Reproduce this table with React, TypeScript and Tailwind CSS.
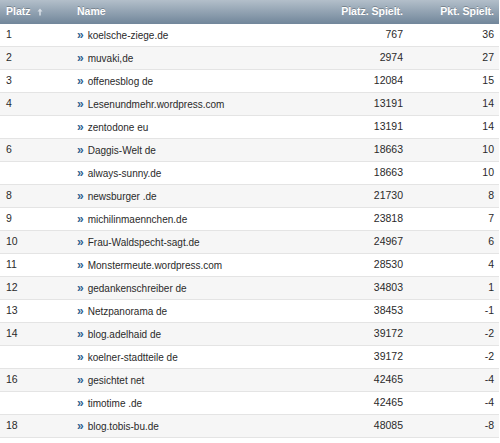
import React from "react";

const rows: [string, string, string, string][] = [
  ["1", "koelsche-ziege.de", "767", "36"],
  ["2", "muvaki,de", "2974", "27"],
  ["3", "offenesblog de", "12084", "15"],
  ["4", "Lesenundmehr.wordpress.com", "13191", "14"],
  ["", "zentodone eu", "13191", "14"],
  ["6", "Daggis-Welt de", "18663", "10"],
  ["", "always-sunny.de", "18663", "10"],
  ["8", "newsburger .de", "21730", "8"],
  ["9", "michilinmaennchen.de", "23818", "7"],
  ["10", "Frau-Waldspecht-sagt.de", "24967", "6"],
  ["11", "Monstermeute.wordpress.com", "28530", "4"],
  ["12", "gedankenschreiber de", "34803", "1"],
  ["13", "Netzpanorama de", "38453", "-1"],
  ["14", "blog.adelhaid de", "39172", "-2"],
  ["", "koelner-stadtteile de", "39172", "-2"],
  ["16", "gesichtet net", "42465", "-4"],
  ["", "timotime .de", "42465", "-4"],
  ["18", "blog.tobis-bu.de", "48085", "-8"],
];

export default function App() {
  return (
    <div
      className="w-[500px] h-[443px] bg-white text-[#2a2a2a]"
      style={{ fontFamily: '"Liberation Sans", Arial, sans-serif' }}
    >
      <div className="w-[499px]">
        <div className="grid grid-cols-[74px_1fr_90px_89px] h-[24px] items-center bg-gradient-to-b from-[#b3bfca] to-[#71869a] text-white font-bold text-[10.5px] [text-shadow:0_-1px_0_rgba(0,0,0,0.25)]">
          <div className="pl-[6px] flex items-center gap-[6px]">
            <span>Platz</span>
            <svg width="6" height="8" viewBox="0 0 6 8" className="opacity-80">
              <path d="M3 0.5 L5.5 3.5 L3.8 3.5 L3.8 7.5 L2.2 7.5 L2.2 3.5 L0.5 3.5 Z" fill="#e8edf2" />
            </svg>
          </div>
          <div className="pl-[3px]">Name</div>
          <div className="text-right pr-[7px]">Platz. Spielt.</div>
          <div className="text-right pr-[5px]">Pkt. Spielt.</div>
        </div>
        {rows.map((r, i) => (
          <div
            key={i}
            className={`grid grid-cols-[74px_1fr_90px_89px] h-[23px] items-center border-b border-[#e4e4e4] ${
              i % 2 === 1 ? "bg-[#f6f6f6]" : "bg-white"
            }`}
          >
            <div className="pl-[6px] text-[10.5px]">{r[0]}</div>
            <div className="pl-[3px] flex items-center text-[10px]">
              <span className="text-[#2f5f8f] font-bold text-[12px] mr-[4px] leading-none -mt-[1px]">»</span>
              <span>{r[1]}</span>
            </div>
            <div className="text-right pr-[7px] text-[10.5px]">{r[2]}</div>
            <div className="text-right pr-[5px] text-[10.5px]">{r[3]}</div>
          </div>
        ))}
      </div>
    </div>
  );
}
